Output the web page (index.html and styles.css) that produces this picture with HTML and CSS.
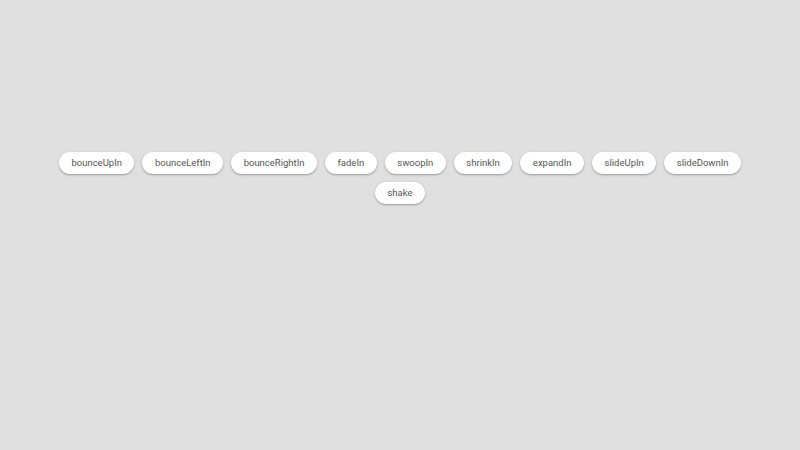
FILE: index.html
```html
<!DOCTYPE html>
<html>
<head>
<meta charset="utf-8">
<link rel="stylesheet" href="styles.css">
</head>
<body>
<div class="wrap">
  <button class="btn">bounceUpIn</button>
  <button class="btn">bounceLeftIn</button>
  <button class="btn">bounceRightIn</button>
  <button class="btn">fadeIn</button>
  <button class="btn">swoopIn</button>
  <button class="btn">shrinkIn</button>
  <button class="btn">expandIn</button>
  <button class="btn">slideUpIn</button>
  <button class="btn">slideDownIn</button>
  <button class="btn">shake</button>
</div>
</body>
</html>
```
FILE: styles.css
```css
html, body {
  margin: 0;
  padding: 0;
  background: #e0e0e0;
  width: 800px;
  height: 450px;
  overflow: hidden;
}
.wrap {
  width: 720px;
  margin: 0 auto;
  padding-top: 148px;
  display: flex;
  flex-wrap: wrap;
  justify-content: center;
}
.btn {
  margin: 4px;
  height: 22px;
  padding: 0 12.5px;
  border: none;
  border-radius: 11px;
  background: #fff;
  color: #555;
  font-family: Roboto, "Liberation Sans", sans-serif;
  font-size: 9.5px;
  line-height: 22px;
  box-shadow: 0 1px 3px rgba(0,0,0,0.2), 0 1px 1px rgba(0,0,0,0.14);
  cursor: pointer;
}
```
